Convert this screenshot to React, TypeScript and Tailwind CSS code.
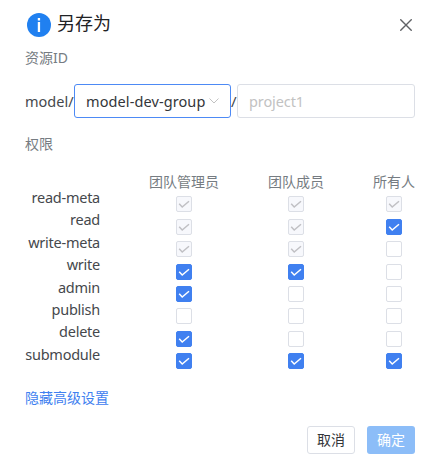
const rows = ['read-meta', 'read', 'write-meta', 'write', 'admin', 'publish', 'delete', 'submodule'];

type State = 'locked' | 'on' | 'off';

const columns: { title: string; states: State[] }[] = [
  { title: '团队管理员', states: ['locked', 'locked', 'locked', 'on', 'on', 'off', 'on', 'on'] },
  { title: '团队成员', states: ['locked', 'locked', 'locked', 'on', 'off', 'off', 'off', 'on'] },
  { title: '所有人', states: ['locked', 'on', 'off', 'off', 'off', 'off', 'off', 'on'] },
];

const boxStyles: Record<State, string> = {
  locked: 'border-[#dcdfe6] bg-[#f7f8fc] text-[#c0c0c4]',
  on: 'border-[#4080f0] bg-[#4080f0] text-white',
  off: 'border-[#dcdfe6] bg-white',
};

function Checkbox({ state }: { state: State }) {
  return (
    <div className="h-[22.4px] shrink-0">
      <div role="checkbox" aria-checked={state !== 'off'} className={`size-4 rounded-[2px] border ${boxStyles[state]}`}>
        {state !== 'off' && (
          <svg viewBox="0 0 14 14" className="block size-3.5" fill="none" stroke="currentColor" strokeWidth="1.5">
            <path d="M2.2 6.8 5.2 10 12 4.2" />
          </svg>
        )}
      </div>
    </div>
  );
}

export default function App() {
  return (
    <div className="h-[467px] w-[440px] bg-white pr-[25px] pl-[25px] font-['Noto_Sans','Noto_Sans_CJK_SC',sans-serif] text-sm leading-[22.4px] text-[#45484c]">
      <header className="flex h-[47px] items-center pt-[2px]">
        <svg viewBox="0 0 24 24" className="ml-[2px] size-6">
          <circle cx="12" cy="12" r="12" fill="#2080f0" />
          <path d="M10.8 5h2.3v2.4h-2.3zM10.8 9h2.3v10h-2.3z" fill="white" />
        </svg>
        <h1 className="mb-[3px] ml-[6px] text-lg text-[#1f2225]">另存为</h1>
        <button aria-label="关闭" className="mr-[3px] ml-auto">
          <svg viewBox="0 0 12 12" className="block size-3" fill="none" stroke="#606266" strokeWidth="1.4">
            <path d="M.3.3 11.7 11.7M11.7.3.3 11.7" />
          </svg>
        </button>
      </header>

      <div className="text-[#767c82]">资源ID</div>

      <div className="mt-[14.6px] flex h-[34px] items-center">
        <span className="w-[49px] whitespace-nowrap text-[14.5px]">model/</span>
        <div className="flex h-[34px] w-[157px] items-center justify-between rounded-[3px] border border-[#4d8af5] pr-[11px] pl-[11px]">
          <span className="whitespace-nowrap text-[14.5px] tracking-[0.1px] text-[#333639]">model-dev-group</span>
          <svg viewBox="0 0 10 6" className="h-1.5 w-2.5 shrink-0" fill="none" stroke="#c2c2c2">
            <path d="M.5.5 5 5 9.5.5" />
          </svg>
        </div>
        <span className="w-[6px] text-[15px]">/</span>
        <input className="h-[34px] w-[178px] rounded-[3px] border border-[#dcdfe6] px-[11px] text-[14.5px] tracking-[-0.1px] placeholder:text-[#c2c2c2]" placeholder="project1" />
      </div>

      <div className="mt-[15px] text-[#767c82]">权限</div>

      <div className="mt-[15.4px] flex h-[199px] justify-between">
        <div className="w-[75px] pt-[15.1px] text-right text-[14.5px] tracking-[-0.25px] whitespace-nowrap">
          {rows.map((row) => (
            <div key={row}>{row}</div>
          ))}
        </div>
        {columns.map((column) => (
          <div key={column.title} className="flex flex-col items-center">
            <div className="mb-[3.2px] shrink-0 text-[#767c82]">{column.title}</div>
            {column.states.map((state, index) => (
              <Checkbox key={rows[index]} state={state} />
            ))}
          </div>
        ))}
      </div>

      <button className="mt-[17.2px] block text-[#4080f0]">隐藏高级设置</button>

      <footer className="mt-[16.8px] flex justify-end gap-3">
        <button className="h-7 w-12 rounded-[3px] border border-[#dcdfe6] leading-[26px] text-[#333639]">取消</button>
        <button className="h-7 w-12 rounded-[3px] bg-[#8cbdf8] leading-7 text-white">确定</button>
      </footer>
    </div>
  );
}
